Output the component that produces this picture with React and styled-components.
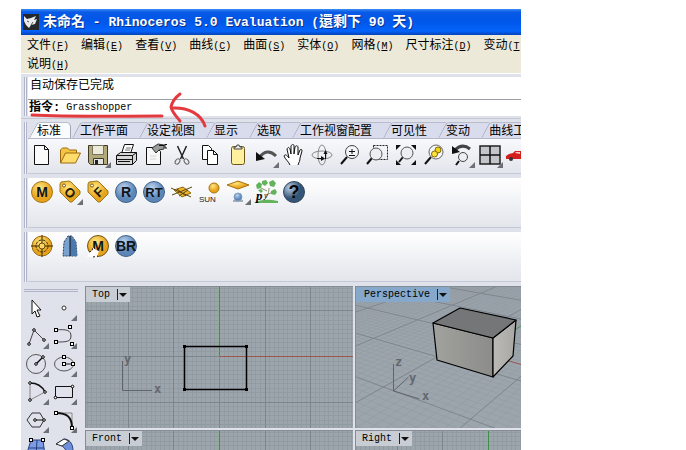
import React, { useState } from "react";
import styled, { createGlobalStyle } from "styled-components";

const GlobalStyle = createGlobalStyle`
    * {
        box-sizing: border-box;
    }

    body {
        margin: 0;
        background-color: #fff;
        font-family: "Liberation Mono", "Noto Sans CJK SC", monospace;
        font-size: 12px;
        color: #000;
    }

    button, input {
        font: inherit;
        color: inherit;
        border: none;
        padding: 0;
        background: transparent;
        outline: none;
    }
`;

const Window = styled.main`
    position: relative;
    display: flex;
    flex-direction: column;
    height: calc(100vh - 9px);
    margin: 9px 165px 0 21px;
    overflow: hidden;
    background-color: #e0e2eb;
`;

const TitleBar = styled.header`
    display: flex;
    align-items: center;
    gap: 4px;
    flex: none;
    height: 26px;
    padding: 0 2px;
    background: linear-gradient(#3a8ff5 0, #0a5ae6 3px, #0056e8 12px, #0463fb 22px, #0442b8 26px);
`;

const Title = styled.h1`
    margin: 0;
    font-family: "Liberation Mono", "Noto Sans CJK TC", monospace;
    font-size: 13px;
    line-height: 24px;
    font-weight: bold;
    color: #fff;
    white-space: pre;
    text-shadow: 1px 1px 0 #0b2f8a;
`;

const Cjk = styled.span`
    font-size: 14px;
`;

const MenuBar = styled.nav`
    display: flex;
    flex-direction: column;
    flex: none;
    padding-left: 6px;
    background-color: #ece9d8;
    border-bottom: 1px solid #fff;
`;

const MenuLine = styled.div`
    display: flex;
    align-items: flex-start;
    gap: 12px;
    height: 19px;
`;

const MenuItem = styled.button`
    flex: none;
    line-height: 22px;
    white-space: nowrap;
`;

const Small = styled.span`
    font-size: 10px;
`;

const Band = styled.section`
    display: flex;
    flex: none;
    margin-top: ${props => props.$top}px;
    padding-left: 3px;
`;

const Grip = styled.div`
    flex: none;
    width: 4px;
    border-left: 1px solid #b0b4c8;
    background: linear-gradient(90deg, #f4f5fa 1px, #b0b4c8 1px, #b0b4c8 2px, #e0e2eb 2px);
`;

const Command = styled.div`
    flex: 1;
    min-width: 0;
    background-color: #fff;
`;

const History = styled.output`
    display: block;
    height: 22px;
    padding-left: 2px;
    line-height: 18px;
`;

const Prompt = styled.label`
    display: flex;
    align-items: center;
    height: 17px;
    padding-left: 1px;
    border-top: 1px solid #9c9ea6;
    font-weight: bold;
    line-height: 14px;
`;

const PromptInput = styled.input`
    flex: 1;
    min-width: 0;
    margin-left: 6px;
    font-size: 10px;
    font-weight: normal;
`;

const TabBand = styled(Band)`
    border-top: 1px solid #c5c8d4;
    padding-top: 3px;
`;

const TabPanel = styled.div`
    flex: 1;
    min-width: 0;
`;

const Tabs = styled.div`
    display: flex;
    height: 17px;
    overflow: hidden;
    border-bottom: 1px solid #b4b8c8;
`;

const Tab = styled.button`
    position: relative;
    z-index: 0;
    flex: none;
    height: 17px;
    padding: 2px 10px 0 9px;
    line-height: 17px;
    white-space: nowrap;

    &::before {
        content: "";
        position: absolute;
        z-index: -1;
        inset: 0 -5px 0 5px;
        transform: skewX(-28deg);
        border-left: 1px solid #9fa5ba;
        border-top: 1px solid #b8bccb;
        border-top-left-radius: 3px;
        background-color: #d9dcec;
    }

    &[aria-selected="true"]::before {
        right: 10px;
        background-color: #fafbfd;
    }

    &[aria-selected="true"]::after {
        content: "";
        position: absolute;
        z-index: -1;
        inset: 0 0 0 15px;
        border-top: 1px solid #b8bccb;
        border-right: 1px solid #9fa5ba;
        border-top-right-radius: 5px;
        background-color: #fafbfd;
    }
`;

const ToolRow = styled.div`
    display: flex;
    flex: 1;
    min-width: 0;
    height: ${props => props.$height}px;
    padding-top: ${props => props.$pad || 0}px;
    overflow: hidden;
    background: linear-gradient(${props => props.$from || "#fff"}, #e3e5ec);
    border-bottom: 1px solid #c6c9d5;
`;

const ToolButton = styled.button`
    flex: none;
    width: 28px;
    height: 28px;

    svg {
        display: block;
    }
`;

const Workspace = styled.div`
    display: flex;
    flex: 1;
    min-height: 0;
    margin-top: 4px;
`;

const SideBar = styled.aside`
    flex: none;
    width: 64px;
    padding: 3px 6px 0 1px;
    overflow: hidden;
`;

const SideGrip = styled.div`
    height: 3px;
    margin: 0 1px 2px 2px;
    border: solid #b0b4c8;
    border-width: 1px 0;
`;

const SideTools = styled.div`
    display: grid;
    grid-template-columns: 28px 28px;
`;

const Viewports = styled.div`
    display: grid;
    flex: 1;
    min-width: 0;
    grid-template-columns: 268fr 166fr;
    grid-template-rows: 142px minmax(0, 1fr);
    gap: 2px;
`;

const Viewport = styled.section`
    position: relative;
    min-width: 0;
    overflow: hidden;
    background-color: #9ca4ac;
    border-top: 1px solid #858c94;
    border-left: 1px solid #858c94;
`;

const Scene = styled.svg`
    position: absolute;
    inset: 0;
    width: 100%;
    height: 100%;
`;

const ViewLabel = styled.button`
    position: relative;
    display: flex;
    align-items: center;
    gap: 6px;
    height: 15px;
    padding: 0 2px 0 ${props => (props.$active ? 8 : 6)}px;
    font-size: 10px;
    line-height: 15px;
    background-color: ${props => (props.$active ? "#86a8cb" : "#c8cdd3")};
`;

const Marks = styled.svg`
    position: absolute;
    top: 80px;
    left: 0;
    pointer-events: none;
`;

/* ---------- icons, all on a 28 x 28 grid ---------- */

const Line = ({ d, c = "#111", w = 1, f = "none" }) => (
    <path d={d} stroke={c} strokeWidth={w} fill={f} strokeLinejoin="round" />
);

const Dots = ({ at, round }) => at.map(([x, y]) => (
    round
        ? <circle key={`${x}-${y}`} cx={x} cy={y} r="1.3" fill="#fff" stroke="#000" />
        : <rect key={`${x}-${y}`} x={x - 1.5} y={y - 1.5} width="3" height="3" fill="#fff" stroke="#000" />
));

const Badge = ({ text, fill, edge, size = 14, color = "#10151c" }) => (
    <>
        <circle cx="14" cy="14" r="10.5" fill={`url(#${fill})`} stroke={edge} />
        <text x="14" y={14 + Math.round(size * 0.36)} textAnchor="middle" fontFamily="Liberation Sans, sans-serif"
            fontWeight="bold" fontSize={size} fill={color}>{text}</text>
    </>
);

const Tag = ({ text, turn }) => (
    <>
        <path d="M4 6l1-2 8-1 2 1 9 9v3l-8 8h-2l-10-10z" fill="url(#gold)" stroke="#9a7a1c" />
        <circle cx="8" cy="7.500" r="1.500" fill="#fff" stroke="#7a5c10" />
        <text x="14.500" y="19" transform={`rotate(${turn} 14 14)`} textAnchor="middle" fontFamily="Liberation Sans, sans-serif"
            fontWeight="bold" fontSize="13" fill="#221a05">{text}</text>
    </>
);

const icons = {
    new: <Line d="M6.500 4.500h10l4 4v15h-14zM16.500 4.500v4h4" f="#fafafa" />,
    open: <>
        <Line d="M4.500 22V9l2-2h5l2 2h7v4" f="#f6c445" c="#9a6b0c" />
        <Line d="M4.500 22l5-10h15l-5 10z" f="#ffdc6b" c="#9a6b0c" />
    </>,
    save: <>
        <Line d="M4.500 4.500h19v19h-17l-2-2z" f="#b3aa7c" c="#3c3a25" />
        <Line d="M8.500 4.500h11v9h-11z" f="#eceadb" c="#77745a" />
        <Line d="M9.500 17.500h10v6h-10z" f="#e4e4e4" c="#3c3a25" />
        <path d="M11 19h3v4h-3z" fill="#222" />
    </>,
    print: <>
        <Line d="M9.500 12.500l3-9h9l-3 9" f="#fff" />
        <Line d="M14 7h5M13 9h5" c="#777" />
        <Line d="M4.500 14.500l4-3h16v8l-4 4h-16z" f="#d6d6d6" />
        <Line d="M4.500 14.500h16l4-3M20.500 14.500v9M4.500 18.500h16M6 20.500h12" />
    </>,
    props: <>
        <Line d="M6.500 6.500h10l4 4v13h-14z" f="#f7f7f7" />
        <Line d="M12 7l6-4 6 1v4l-5 1-3 3z" f="#9b9b9b" c="#333" />
        <Line d="M19 4.500h5l1-1h2M25 3v4h2" />
        <Line d="M10 15h6M10 18h6" c="#d5d5d5" />
    </>,
    cut: <>
        <Line d="M9.500 5l6 13M18.500 5l-6 13" w={1.500} c="#222" />
        <ellipse cx="9.500" cy="20.500" rx="2" ry="3" transform="rotate(35 9.500 20.500)" fill="none" stroke="#666" />
        <ellipse cx="18.500" cy="20.500" rx="2" ry="3" transform="rotate(-35 18.500 20.500)" fill="none" stroke="#666" />
    </>,
    copy: <>
        <Line d="M6.500 4.500h6l3 3v11h-9z" f="#fff" />
        <Line d="M11.500 9.500h6l4 4v10h-10zM17.500 9.500v4h4" f="#fff" />
    </>,
    paste: <>
        <rect x="7.500" y="5.500" width="13" height="18" rx="2" fill="#fff0a0" stroke="#6b5612" />
        <Line d="M10 8V6h2l1-2h2l1 2h2v2z" f="#e9e9e9" c="#444" />
    </>,
    undo: <>
        <path d="M8 16c4-6 10-7 16-1" fill="none" stroke="#555" strokeWidth="3" />
        <path d="M4 20v-9l9 7z" fill="#111" />
    </>,
    pan: <Line d="M10 24c-1-3-5-6-6-9 1-2 3-1 5 2L7 8c1-2 2-2 3 0l1 5V5c1-2 3-2 3 0v8l1-7c1-2 3-1 3 0v8l2-5c1-1 2-1 2 1l-2 7c0 3-1 4-2 7" f="#fff" />,
    rotate: <>
        <ellipse cx="14" cy="14" rx="10" ry="4" fill="none" stroke="#8a8a8a" />
        <ellipse cx="14" cy="14" rx="4" ry="10" fill="none" stroke="#8a8a8a" />
        <Line d="M9 17.500h5M17.500 12v6" />
        <path d="M13 15l4 2.500-4 2.500zM15.500 13l2-4 2 4z" fill="#111" />
    </>,
    zoom: <>
        <Line d="M5 23l6-7" w={2} />
        <circle cx="16" cy="11" r="6.500" fill="#f4f5f8" stroke="#444" />
        <Line d="M13 10.500h6M16 8v5M13 14.500h6" />
    </>,
    zoomWindow: <>
        <path d="M9.500 4.500h14v14h-14z" fill="none" stroke="#222" strokeDasharray="2 1" />
        <Line d="M3 23l5-6" w={2} />
        <circle cx="12" cy="13" r="6" fill="#eceef3" stroke="#555" />
    </>,
    zoomExtents: <>
        <Line d="M7 21l4-5" w={2} />
        <circle cx="15" cy="12" r="6" fill="#eceef3" stroke="#555" />
        <path d="M4 4h5l-5 5zM24 4v5l-5-5zM24 24h-5l5-5zM4 24v-5l5 5z" fill="#111" />
    </>,
    zoomSelected: <>
        <Line d="M5 23l6-7" w={2} />
        <circle cx="16" cy="11" r="7" fill="#f4f5f8" stroke="#666" />
        <circle cx="18" cy="9" r="3" fill="#f2d21a" stroke="#7f6a06" />
        <circle cx="14.500" cy="13" r="3" fill="#ffe33c" stroke="#7f6a06" />
    </>,
    undoView: <>
        <path d="M7 9c5-5 10-5 15-1" fill="none" stroke="#444" strokeWidth="3" />
        <path d="M4 13V5l8 6z" fill="#111" />
        <Line d="M8 24l3-4" w={2} />
        <circle cx="15" cy="16" r="4.500" fill="#eceef3" stroke="#444" />
    </>,
    fourView: <>
        <path d="M4 5h20v18H4z" fill="#c3c5ca" stroke="#222" strokeWidth="1.500" />
        <Line d="M14 5v18M4 14h20" w={1.500} />
    </>,
    car: <>
        <path d="M2 15l3-2 4-1 2-2h6l1 3h8v5H2z" fill="#d3201c" />
        <circle cx="7" cy="18" r="2" fill="#333" />
        <circle cx="21" cy="18" r="2" fill="#333" />
        <path d="M11 12l1-1h4v2z" fill="#f5c8c4" />
    </>,
    m: <Badge text="M" fill="gold" edge="#a87411" />,
    o: <Tag text="O" turn={42} />,
    f: <Tag text="F" turn={-45} />,
    r: <Badge text="R" fill="blue" edge="#3f6288" />,
    rt: <Badge text="RT" fill="blue" edge="#3f6288" size={13} />,
    plane: <>
        <Line d="M6 12l9-3 8 6-9 4z" f="#f0b62c" c="#8c6a10" />
        <Line d="M3 10l20 9M4 17l20-8M9 11l9 7M11 18l9-6" c="#5a4610" />
    </>,
    sun: <>
        <circle cx="18" cy="10" r="5" fill="url(#gold)" stroke="#a87411" />
        <text x="3" y="24" fontFamily="Liberation Sans, sans-serif" fontSize="8" fill="#222">SUN</text>
    </>,
    shadow: <>
        <path d="M3 7l11-4 11 4-11 4z" fill="url(#gold)" stroke="#a87411" />
        <path d="M9 23h10" stroke="#a9adb6" strokeWidth="2" />
        <circle cx="14" cy="19" r="4" fill="url(#blue)" stroke="#7d9fc4" />
    </>,
    tree: <>
        <Line d="M12 22c4-4 5-8 5-12M14 17l7-3M15 13L7 9" c="#8a8f6b" />
        <g fill="#62b35c">
            <path d="M4 7l3-3 3 2-1 4-4 1zM10 3l4-1 2 3-3 3-3-2zM17 4l4-2 3 3-2 4-4-1zM19 13l4-2 2 3-2 3-4-1zM6 12l3-1 2 2-2 2z" />
            <path d="M2 25c7-4 14-4 24-2v2z" />
        </g>
        <text x="4" y="22" fontFamily="Liberation Serif, serif" fontStyle="italic" fontWeight="bold" fontSize="13">p</text>
        <text x="12" y="20" fontFamily="Liberation Serif, serif" fontStyle="italic" fontSize="8">y</text>
    </>,
    help: <Badge text="?" fill="darkBlue" edge="#32465e" size={18} color="#050608" />,
    target: <>
        <circle cx="14" cy="14" r="10" fill="url(#gold)" stroke="#986b11" />
        <circle cx="14" cy="14" r="6" fill="none" stroke="#4a3305" strokeDasharray="3 1" />
        <circle cx="14" cy="14" r="3" fill="#fbd766" stroke="#6b4b0a" />
        <Line d="M14 3v8M14 17v8M3 14h8M17 14h8" c="#3a2a05" />
    </>,
    tower: <>
        <path d="M8 10l4-6h4l4 6 1 14H7z" fill="#7ba2cf" stroke="#27405f" strokeDasharray="2 1" />
        <path d="M14 4l6 6 1 14h-7z" fill="#4c79ad" />
        <Line d="M14 4v20" />
    </>,
    mCursor: <>
        <Badge text="M" fill="gold" edge="#6e5312" />
        <path d="M3 25l2-5 3-1 1-4 3 3 3 1-2 6z" fill="#fff" />
        <path d="M5 20l3-1 1-4 3 3M9 25l5-1" fill="none" stroke="#222" strokeDasharray="2 2" />
    </>,
    br: <Badge text="BR" fill="blue" edge="#3f6288" />,
    select: <Line d="M10 6v14l3-3 2 6 3-1-3-6h4z" f="#fff" />,
    point: <circle cx="14" cy="14" r="2" fill="#fff" stroke="#333" />,
    polyline: <>
        <Line d="M7 22l5-14 10 10" c="#444" />
        <Dots round at={[[7, 22], [12, 8], [22, 18]]} />
    </>,
    curve: <>
        <Line d="M6 8c10-1 15 0 15 6s-5 6-15 6" c="#444" />
        <Dots at={[[6, 8], [20, 5], [6, 20], [22, 22]]} />
    </>,
    circle: <>
        <circle cx="14" cy="14" r="9.500" fill="none" stroke="#555" />
        <Line d="M14 14l7-7" w={1.500} />
        <Dots round at={[[14, 14], [21, 7]]} />
    </>,
    ellipse: <>
        <ellipse cx="14" cy="14" rx="9.500" ry="7" fill="none" stroke="#555" />
        <Line d="M14 14h9" />
        <Dots at={[[14, 7], [14, 14], [23, 14]]} />
    </>,
    arc: <>
        <Line d="M8 5c7 0 12 3 15 9" w={1.500} />
        <Line d="M8 5v17l15-8" c="#888" />
        <Dots round at={[[8, 5], [8, 22], [23, 14]]} />
    </>,
    rect: <>
        <Line d="M5.500 8.500h17v11h-17z" />
        <Dots round at={[[22.5, 8.5], [5.5, 19.5]]} />
    </>,
    polygon: <>
        <Line d="M5 14l5-7h8l4 7-4 7h-8z" c="#333" />
        <Line d="M13 14h8" />
        <Dots round at={[[13, 14], [22, 14]]} />
    </>,
    fillet: <>
        <Line d="M6 7h16v15" c="#888" />
        <Line d="M6 7c11 0 16 4 16 15" w={2} />
        <Dots at={[[6, 7], [22, 22]]} />
    </>,
    surface: <>
        <path d="M9 6h12l2 16H4z" fill="#7d9be0" stroke="#24407f" />
        <Line d="M15 6l-1 16M7 14h15" c="#24407f" />
        <Dots at={[[9, 6], [21, 6]]} />
    </>,
    extrude: <>
        <path d="M6 10l8-5c5 0 9 4 9 12l-6 5c0-7-4-11-11-12z" fill="#6f90d8" stroke="#24407f" />
        <path d="M6 10l8-5 5 2-7 5z" fill="#fff" stroke="#333" />
    </>
};

const standardTools = [
    ["new", "新建"], ["open", "打开"], ["save", "保存", true], ["print", "打印"], ["props", "属性"],
    ["cut", "剪切"], ["copy", "复制"], ["paste", "粘贴"], ["undo", "复原", true], ["pan", "平移"],
    ["rotate", "旋转"], ["zoom", "缩放"], ["zoomWindow", "框选缩放"], ["zoomExtents", "最大范围"],
    ["zoomSelected", "选取物件"], ["undoView", "复原视图", true], ["fourView", "四视图", true], ["car", "车"]
];

const renderTools = [
    ["m", "M"], ["o", "O", true], ["f", "F"], ["r", "R"], ["rt", "RT"], ["plane", "平面"],
    ["sun", "太阳"], ["shadow", "阴影", true], ["tree", "植物"], ["help", "帮助"]
];

const extraTools = [["target", "目标"], ["tower", "塔"], ["mCursor", "M"], ["br", "BR"]];

const sideTools = [
    ["select", "选取"], ["point", "点", true], ["polyline", "多重直线", true], ["curve", "曲线", true],
    ["circle", "圆", true], ["ellipse", "椭圆", true], ["arc", "圆弧", true], ["rect", "矩形", true],
    ["polygon", "多边形", true], ["fillet", "圆角", true], ["surface", "曲面", true], ["extrude", "挤出", true]
];

const menus = [
    [["文件", "F"], ["编辑", "E"], ["查看", "V"], ["曲线", "C"], ["曲面", "S"], ["实体", "O"], ["网格", "M"], ["尺寸标注", "D"], ["变动", "T"]],
    [["说明", "H"]]
];

const tabs = ["标准", "工作平面", "设定视图", "显示", "选取", "工作视窗配置", "可见性", "变动", "曲线工"];

const Tools = ({ items }) => items.map(([name, label, more]) => (
    <ToolButton key={name} type="button" aria-label={label}>
        <svg width="28" height="28" viewBox="0 0 28 28">
            {icons[name]}
            {more && <path d="M27 21v6h-6z" fill="#6c6f76" />}
        </svg>
    </ToolButton>
));

/* ---------- viewports ---------- */

const CELL = 4.56;

// a flat grid through (ox, oy); every tenth line is a major one
const gridPath = (ox, oy, major) => {
    let d = "";
    for (let i = -40; i < 340; i++) {
        if ((i % 10 === 0) !== major) continue;
        const x = Math.round(ox + i * CELL);
        const y = Math.round(oy + i * CELL);
        if (x >= 0) d += `M${x + 0.5} 0V1000`;
        if (y >= 0 && y < 1000) d += `M0 ${y + 0.5}H1600`;
    }
    return d;
};

// floor grid, each family of lines runs to its own vanishing point
const floorPath = (major) => {
    let d = "";
    for (let i = -60; i < 90; i++) {
        if ((i % 10 === 0) !== major) continue;
        d += `M-540 -110L${141 + i * 19} 142`;
        d += `M400 -110L${103 + i * 15} 142`;
    }
    return d;
};

const FlatScene = ({ ox, oy, children }) => (
    <Scene>
        <path d={gridPath(ox, oy, false)} stroke="#929aa2" />
        <path d={gridPath(ox, oy, true)} stroke="#7e868d" />
        <rect x={ox - 1} y="0" width="1" height={oy} fill="#8fae96" />
        <rect x={ox} y="0" width="1" height={oy} fill="#3f8f4a" />
        {children}
    </Scene>
);

const View = ({ name, active, children }) => (
    <Viewport aria-label={name}>
        {children}
        <ViewLabel type="button" $active={active}>
            {name}
            <svg width="12" height="13" viewBox="0 0 12 13">
                <path d="M1.500 1v11" stroke="#222" />
                <path d="M3 5h8l-4 4z" fill="#111" />
            </svg>
        </ViewLabel>
    </Viewport>
);

const AxisText = ({ x, y, children }) => (
    <text x={x} y={y} fontFamily="DejaVu Sans Mono, monospace" fontSize="12" fontWeight="bold" fill="#62686f">{children}</text>
);

const App = () => {
    const [tab, setTab] = useState("标准");
    const [command, setCommand] = useState("Grasshopper");

    return (
        <>
        <GlobalStyle />
        <Window>
            <TitleBar>
                <svg width="16" height="16" viewBox="0 0 16 16">
                    <rect width="16" height="16" fill="#24282c" />
                    <path d="M1 2l3 3 4-1 5-2-2 4 3-1-2 5-4 1-2 3-3-3-2-4z" fill="#e9ebed" />
                    <path d="M4 7l2 1M8 11l2-3" stroke="#555" />
                </svg>
                <Title><Cjk>未命名</Cjk> - Rhinoceros 5.0 Evaluation (<Cjk>還剩下</Cjk> 90 <Cjk>天</Cjk>)</Title>
            </TitleBar>
            <MenuBar>
                {menus.map((line, i) => (
                    <MenuLine key={i}>
                        {line.map(([name, key]) => (
                            <MenuItem key={key} type="button">{name}<Small>(<u>{key}</u>)</Small></MenuItem>
                        ))}
                    </MenuLine>
                ))}
            </MenuBar>
            <Band $top={3}>
                <Grip />
                <Command>
                    <History>自动保存已完成</History>
                    <Prompt>
                        指令:
                        <PromptInput value={command} onChange={(e) => setCommand(e.target.value)} />
                    </Prompt>
                </Command>
            </Band>
            <TabBand $top={2}>
                <Grip />
                <TabPanel>
                    <Tabs role="tablist">
                        {tabs.map(name => (
                            <Tab key={name} type="button" role="tab" aria-selected={name === tab} onClick={() => setTab(name)}>
                                {name}
                            </Tab>
                        ))}
                    </Tabs>
                    <ToolRow $height={35} $pad={2} $from="#f8f9fc"><Tools items={standardTools} /></ToolRow>
                </TabPanel>
            </TabBand>
            <Band $top={4}>
                <Grip />
                <ToolRow $height={50}><Tools items={renderTools} /></ToolRow>
            </Band>
            <Band $top={4}>
                <Grip />
                <ToolRow $height={50}><Tools items={extraTools} /></ToolRow>
            </Band>
            <Workspace>
                <SideBar>
                    <SideGrip />
                    <SideTools><Tools items={sideTools} /></SideTools>
                </SideBar>
                <Viewports>
                    <View name="Top">
                        <FlatScene ox={133} oy={69}>
                            <path d="M134 69.500H1600" stroke="#9c5650" />
                            <rect x="98.500" y="59.500" width="62" height="43" fill="none" stroke="#000" strokeWidth="1.500" />
                            <path d="M97 58h3v3h-3zM159 58h3v3h-3zM97 101h3v3h-3zM159 101h3v3h-3z" />
                            <path d="M36.500 74v29.500H66" stroke="#5f656c" fill="none" />
                            <AxisText x={38} y={76}>y</AxisText>
                            <AxisText x={68} y={106}>x</AxisText>
                        </FlatScene>
                    </View>
                    <View name="Perspective" active>
                        <Scene>
                            <path d={floorPath(false)} stroke="#929aa2" strokeWidth="0.6" />
                            <path d={floorPath(true)} stroke="#7e868d" />
                            <path d="M150 73l60 18" stroke="#9c5650" />
                            <path d="M160 42l12-7" stroke="#4f8f58" />
                            <g stroke="#000" strokeWidth="1.200" strokeLinejoin="round">
                                <path d="M77 36l4 37 56 17V51z" fill="url(#front)" />
                                <path d="M137 51v39l20-21 3-36z" fill="url(#side)" />
                                <path d="M77 36l27-15 56 12-23 18z" fill="#747678" />
                            </g>
                            <path d="M37.500 77v27l26 8M37.500 104l15-14" stroke="#5f656c" fill="none" />
                            <AxisText x={39} y={79}>z</AxisText>
                            <AxisText x={53} y={95}>y</AxisText>
                            <AxisText x={66} y={113}>x</AxisText>
                        </Scene>
                    </View>
                    <View name="Front">
                        <FlatScene ox={133} oy={69} />
                    </View>
                    <View name="Right">
                        <FlatScene ox={132} oy={69} />
                    </View>
                </Viewports>
            </Workspace>
            <Marks width="200" height="44" viewBox="0 0 200 44" fill="none" stroke="#e23a3e" strokeWidth="3" strokeLinecap="round">
                <path d="M11 26c40 2 85 1 130 1" />
                <path d="M159 5c-4 3-8 8-9 13 1 5 5 9 9 14" />
                <path d="M151 19c16-1 29 6 33 18" />
            </Marks>
            <svg width="0" height="0">
                <defs>
                    <radialGradient id="gold" cx="0.4" cy="0.3"><stop offset="0" stopColor="#ffe680" /><stop offset="1" stopColor="#e8a31c" /></radialGradient>
                    <radialGradient id="blue" cx="0.4" cy="0.3"><stop offset="0" stopColor="#bcd3ee" /><stop offset="1" stopColor="#5c86b8" /></radialGradient>
                    <radialGradient id="darkBlue" cx="0.3" cy="0.3"><stop offset="0" stopColor="#b9d0e8" /><stop offset="1" stopColor="#355577" /></radialGradient>
                    <linearGradient id="front"><stop offset="0" stopColor="#a1a19d" /><stop offset="1" stopColor="#8c8c8a" /></linearGradient>
                    <linearGradient id="side"><stop offset="0" stopColor="#bcbab6" /><stop offset="1" stopColor="#a9a7a4" /></linearGradient>
                </defs>
            </svg>
        </Window>
        </>
    );
};

export default App;
